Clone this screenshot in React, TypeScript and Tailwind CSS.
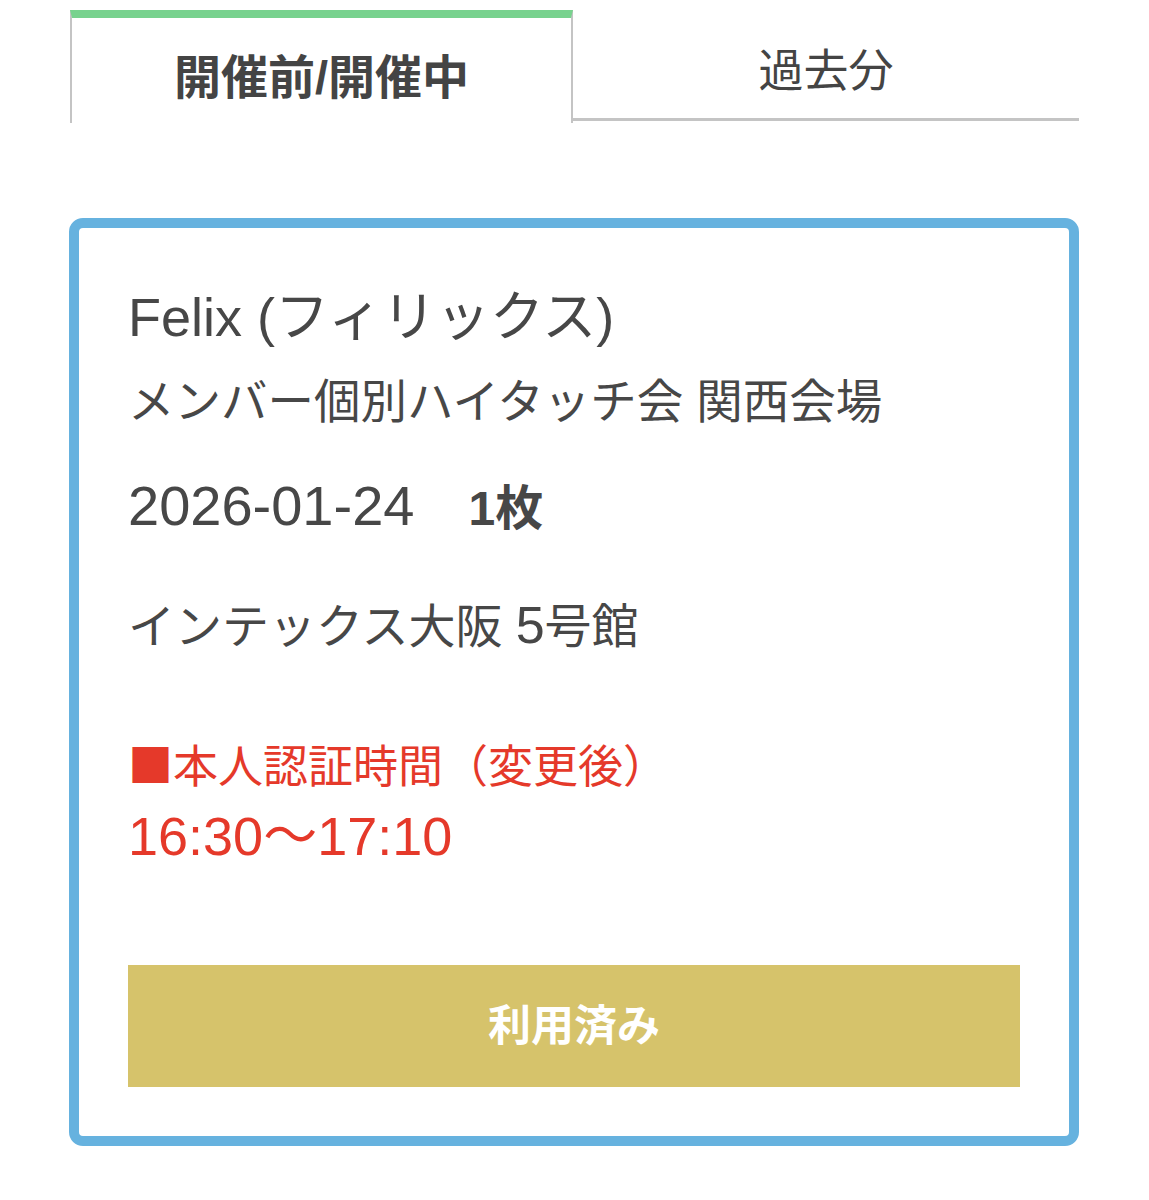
import React from 'react';

const FONT = "font-['Liberation_Sans','Noto_Sans_CJK_JP',sans-serif]";

const App: React.FC = () => {
  return (
    <div className={`w-[1149px] min-h-[1200px] bg-white text-[#474747] ${FONT}`}>
      {/* タブ */}
      <div className="flex pt-[10px] ml-[70px] w-[1009px]">
        <div className="w-[503px] h-[113px] border-t-[8px] border-t-[#78d28e] border-l-2 border-r-2 border-[#c4c4c4] flex items-center justify-center pt-[13px]">
          <span className="text-[47px] font-bold leading-none text-[#444]">開催前/開催中</span>
        </div>
        <div className="flex-1 h-[111px] border-b-[3px] border-[#c4c4c4] flex items-center justify-center pt-[14px]">
          <span className="text-[45px] leading-none text-[#444]">過去分</span>
        </div>
      </div>

      {/* チケットカード */}
      <div className="ml-[69px] mt-[95px] w-[1010px] border-[10px] border-[#66b2df] rounded-[14px] px-[49px] pt-[59px] pb-[49px] flex flex-col">
        <div className="text-[54px] leading-[60px] whitespace-nowrap">Felix (フィリックス)</div>
        <div className="mt-[25px] text-[46.5px] leading-[60px] whitespace-nowrap">メンバー個別ハイタッチ会 関西会場</div>
        <div className="mt-[44px] leading-[60px] whitespace-nowrap flex items-baseline">
          <span className="text-[56px]">2026-01-24</span>
          <span className="ml-[54px] text-[48px] font-bold">1枚</span>
        </div>
        <div className="mt-[56px] text-[47px] leading-[60px] whitespace-nowrap">
          インテックス大阪 <span className="text-[52px]">5</span>号館
        </div>
        <div className="mt-[77px] text-[45px] leading-[60px] text-[#e5392a] whitespace-nowrap">
          <span className="font-['Noto_Sans_CJK_JP',sans-serif]">■</span>本人認証時間（変更後）
        </div>
        <div className="mt-[8px] text-[54px] leading-[60px] text-[#e5392a] whitespace-nowrap">16:30〜17:10</div>
        <button className="mt-[99px] h-[122px] w-full bg-[#d6c36b] flex items-center justify-center">
          <span className="text-[43px] font-bold text-white leading-none">利用済み</span>
        </button>
      </div>
    </div>
  );
};

export default App;
